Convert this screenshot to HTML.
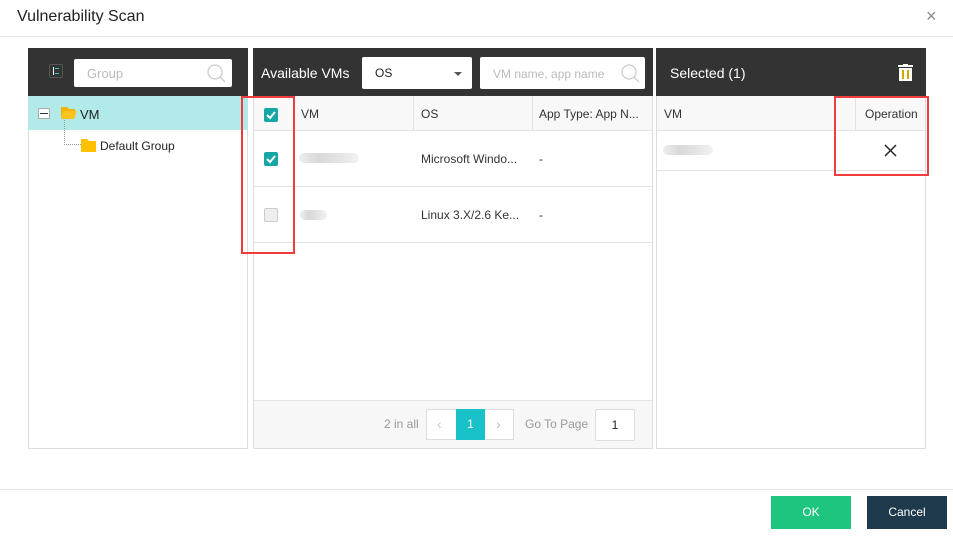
<!DOCTYPE html><html><head><style>
*{margin:0;padding:0;box-sizing:border-box}
body{width:953px;height:536px;background:#fff;font-family:"Liberation Sans",sans-serif;font-size:12px;color:#333;position:relative;overflow:hidden}
.a{position:absolute}
.hd{background:#333;color:#fff}
.cb{position:absolute;width:14px;height:14px;border-radius:2px;background:#17a6a6}
.cb svg{display:block}
.blur{position:absolute;height:10px;border-radius:5px;background:linear-gradient(90deg,#eee,#d8d8d8,#e4e4e4,#f2f2f2)}
</style></head><body>
<div class="a" style="left:17px;top:8px;font-size:16px;color:#222">Vulnerability Scan</div>
<div class="a" style="left:926px;top:6px;font-size:18px;color:#888">×</div>
<div class="a" style="left:0;top:36px;width:953px;height:1px;background:#e3e3e3"></div>

<!-- left panel -->
<div class="a" style="left:28px;top:48px;width:220px;height:401px;border:1px solid #ddd;border-top:none"></div>
<div class="a hd" style="left:28px;top:48px;width:220px;height:48px"></div>
<div class="a" style="left:49px;top:64px;width:14px;height:14px;border:1px solid #555;border-radius:2px"></div>
<div class="a" style="left:53px;top:67px;width:6px;height:8px;border-left:1px solid #fff;"></div>
<div class="a" style="left:55px;top:68px;width:4px;height:6px;border-top:1px solid #3cc;border-bottom:1px solid #3cc"></div>
<div class="a" style="left:74px;top:59px;width:158px;height:28px;background:#fff;border-radius:2px"></div>
<div class="a" style="left:87px;top:66px;color:#bbb;font-size:13px">Group</div>
<svg class="a" style="left:206px;top:63px" width="20" height="20"><circle cx="9" cy="9" r="7" fill="none" stroke="#ccc" stroke-width="1.3"/><line x1="14" y1="14" x2="19" y2="19" stroke="#ccc" stroke-width="1.3"/></svg>
<div class="a" style="left:28px;top:96px;width:220px;height:34px;background:#b2eaea"></div>
<div class="a" style="left:38px;top:108px;width:12px;height:11px;border:1px solid #aaa;background:#fff"></div>
<div class="a" style="left:40px;top:113px;width:8px;height:1px;background:#333"></div>
<svg class="a" style="left:61px;top:106px" width="16" height="13"><path d="M0 1h6l2 2h6v2H3L0 12z" fill="#f0b400"/><path d="M3 5h13l-3 8H0z" fill="#ffc31f"/></svg>
<div class="a" style="left:80px;top:107px;font-size:13px;color:#222">VM</div>
<div class="a" style="left:64px;top:120px;width:17px;height:25px;border-left:1px dotted #999;border-bottom:1px dotted #999"></div>
<svg class="a" style="left:81px;top:139px" width="15" height="13"><path d="M0 0h6l2 2h7v11H0z" fill="#ffc000"/></svg>
<div class="a" style="left:100px;top:139px;color:#222">Default Group</div>

<!-- middle -->
<div class="a" style="left:253px;top:48px;width:400px;height:401px;border:1px solid #ddd;border-top:none"></div>
<div class="a hd" style="left:253px;top:48px;width:400px;height:48px"></div>
<div class="a" style="left:261px;top:65px;color:#fff;font-size:14px">Available VMs</div>
<div class="a" style="left:362px;top:57px;width:110px;height:32px;background:#fff;border-radius:2px"></div>
<div class="a" style="left:375px;top:66px;color:#222">OS</div>
<div class="a" style="left:454px;top:72px;border-left:4px solid transparent;border-right:4px solid transparent;border-top:4px solid #555"></div>
<div class="a" style="left:480px;top:57px;width:165px;height:32px;background:#fff;border-radius:2px"></div>
<div class="a" style="left:493px;top:67px;color:#bbb">VM name, app name</div>
<svg class="a" style="left:620px;top:63px" width="20" height="20"><circle cx="9" cy="9" r="7" fill="none" stroke="#ccc" stroke-width="1.3"/><line x1="14" y1="14" x2="19" y2="19" stroke="#ccc" stroke-width="1.3"/></svg>
<div class="a" style="left:254px;top:96px;width:398px;height:35px;background:#f8f8f8;border-bottom:1px solid #e3e3e3"></div>
<div class="a" style="left:413px;top:96px;width:1px;height:35px;background:#e3e3e3"></div>
<div class="a" style="left:532px;top:96px;width:1px;height:35px;background:#e3e3e3"></div>
<div class="a" style="left:301px;top:107px">VM</div>
<div class="a" style="left:421px;top:107px">OS</div>
<div class="a" style="left:539px;top:107px">App Type: App N...</div>
<div class="a" style="left:254px;top:186px;width:398px;height:1px;background:#e3e3e3"></div>
<div class="a" style="left:254px;top:242px;width:398px;height:1px;background:#e3e3e3"></div>
<div class="cb" style="left:264px;top:108px"><svg width="14" height="14"><path d="M3 7l3 3 5-6" fill="none" stroke="#fff" stroke-width="2"/></svg></div>
<div class="cb" style="left:264px;top:152px"><svg width="14" height="14"><path d="M3 7l3 3 5-6" fill="none" stroke="#fff" stroke-width="2"/></svg></div>
<div class="a" style="left:264px;top:208px;width:14px;height:14px;border:1px solid #ccc;background:#eee;border-radius:2px"></div>
<div class="blur" style="left:299px;top:153px;width:60px"></div>
<div class="blur" style="left:300px;top:210px;width:27px"></div>
<div class="a" style="left:421px;top:152px">Microsoft Windo...</div>
<div class="a" style="left:539px;top:152px">-</div>
<div class="a" style="left:421px;top:208px">Linux 3.X/2.6 Ke...</div>
<div class="a" style="left:539px;top:208px">-</div>
<div class="a" style="left:254px;top:400px;width:398px;height:48px;background:#f7f7f7;border-top:1px solid #e3e3e3"></div>
<div class="a" style="left:384px;top:417px;color:#999">2 in all</div>
<div class="a" style="left:426px;top:409px;width:88px;height:31px;background:#fff;border:1px solid #ddd"></div>
<div class="a" style="left:437px;top:416px;color:#ccc;font-size:14px">‹</div>
<div class="a" style="left:456px;top:409px;width:29px;height:31px;background:#19c1c8;color:#fff;text-align:center;line-height:31px">1</div>
<div class="a" style="left:496px;top:416px;color:#bbb;font-size:14px">›</div>
<div class="a" style="left:525px;top:417px;color:#999">Go To Page</div>
<div class="a" style="left:595px;top:409px;width:40px;height:32px;background:#fff;border:1px solid #ddd;border-radius:2px;text-align:center;line-height:31px;color:#222">1</div>

<!-- right -->
<div class="a" style="left:656px;top:48px;width:270px;height:401px;border:1px solid #ddd;border-top:none"></div>
<div class="a hd" style="left:656px;top:48px;width:270px;height:48px"></div>
<div class="a" style="left:670px;top:65px;color:#fff;font-size:14px">Selected (1)</div>
<svg class="a" style="left:898px;top:64px" width="16" height="17"><rect x="0" y="1" width="15" height="2" fill="#fff"/><rect x="5" y="0" width="5" height="2" fill="#fff"/><path d="M1 4h13v13H1z" fill="#fff"/><rect x="4" y="6" width="2" height="9" fill="#d4a800"/><rect x="9" y="6" width="2" height="9" fill="#d4a800"/></svg>
<div class="a" style="left:657px;top:96px;width:268px;height:35px;background:#f8f8f8;border-bottom:1px solid #e3e3e3"></div>
<div class="a" style="left:855px;top:96px;width:1px;height:35px;background:#e3e3e3"></div>
<div class="a" style="left:664px;top:107px">VM</div>
<div class="a" style="left:865px;top:107px">Operation</div>
<div class="blur" style="left:663px;top:145px;width:50px"></div>
<div class="a" style="left:657px;top:170px;width:268px;height:1px;background:#e3e3e3"></div>
<svg class="a" style="left:884px;top:144px" width="13" height="13"><path d="M1 1l11 11M12 1L1 12" stroke="#222" stroke-width="1.5"/></svg>

<!-- red boxes -->
<div class="a" style="left:241px;top:96px;width:54px;height:158px;border:2px solid #f03c3c"></div>
<div class="a" style="left:834px;top:96px;width:95px;height:80px;border:2px solid #f03c3c"></div>

<div class="a" style="left:0;top:489px;width:953px;height:1px;background:#e3e3e3"></div>
<div class="a" style="left:771px;top:496px;width:80px;height:33px;background:#1ec57f;color:#fff;text-align:center;line-height:33px">OK</div>
<div class="a" style="left:867px;top:496px;width:80px;height:33px;background:#1f3a4c;color:#fff;text-align:center;line-height:33px">Cancel</div>
</body></html>
